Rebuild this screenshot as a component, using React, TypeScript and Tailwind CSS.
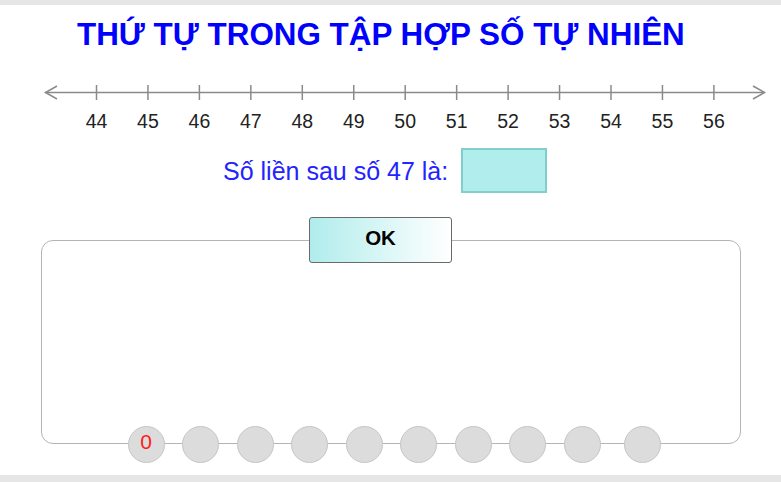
import React from "react";

const labels = [44, 45, 46, 47, 48, 49, 50, 51, 52, 53, 54, 55, 56];

function NumberLine() {
  const x0 = 96.5;
  const step = 51.45;
  return (
    <svg width="781" height="58" viewBox="0 80 781 58" className="block">
      <line x1="45" y1="92.5" x2="765" y2="92.5" stroke="#8a8a8a" strokeWidth="1.5" />
      <polyline points="57,86 45.5,92.5 57,99" fill="none" stroke="#8a8a8a" strokeWidth="1.5" />
      <polyline points="753,86 764.5,92.5 753,99" fill="none" stroke="#8a8a8a" strokeWidth="1.5" />
      {labels.map((n, i) => {
        const x = x0 + step * i;
        return (
          <g key={n}>
            <line x1={x} y1="85" x2={x} y2="100" stroke="#8a8a8a" strokeWidth="1.5" />
            <text
              x={x}
              y="128"
              textAnchor="middle"
              fontFamily="'Liberation Sans', Arial, sans-serif"
              fontSize="19.5"
              fill="#222"
            >
              {n}
            </text>
          </g>
        );
      })}
    </svg>
  );
}

export default function App() {
  const circles = [0, 1, 2, 3, 4, 5, 6, 7, 8, 9];
  return (
    <div
      className="w-[781px] h-[482px] bg-[#e6e6e6] flex flex-col overflow-hidden"
      style={{ fontFamily: "'Liberation Sans', Arial, sans-serif" }}
    >
      <div className="h-[5px] shrink-0" />
      <div className="h-[470px] bg-white flex flex-col shrink-0">
        <h1 className="mt-[14px] pl-[77px] text-[31.4px] leading-[32px] font-bold text-[#0000ff] whitespace-nowrap">
          THỨ TỰ TRONG TẬP HỢP SỐ TỰ NHIÊN
        </h1>
        <div className="mt-[29px]">
          <NumberLine />
        </div>
        <div className="mt-[10px] flex items-center pl-[223px]">
          <span className="text-[25px] leading-[28px] text-[#2323ff] whitespace-nowrap">
            Số liền sau số 47 là:
          </span>
          <div className="ml-[13px] w-[86px] h-[45px] bg-[#b2eded] border-2 border-[#80cfcb]" />
        </div>
        <div className="relative mt-[47px] ml-[41px] w-[700px] h-[204px] border border-[#b4b4b4] rounded-[12px]">
          <button className="absolute left-[267px] top-[-24px] w-[143px] h-[46px] rounded-[3px] border border-[#6a6a6a] bg-gradient-to-r from-[#b0ecec] to-white flex items-start justify-center pt-[9px]">
            <span className="text-[20.5px] leading-[22px] font-bold text-black">OK</span>
          </button>
          <div className="absolute left-[85.5px] bottom-[-20px] flex gap-[17.5px]">
            {circles.map((i) => (
              <div
                key={i}
                className={`w-[37px] h-[37px] rounded-full bg-[#dcdcdc] border-[1.5px] border-[#c6c6c6] flex items-start justify-center pt-[3px] ${i === 9 ? "ml-[5.5px]" : ""}`}
              >
                {i === 0 ? (
                  <span className="text-[21px] leading-[24px] text-[#ff1a1a]">0</span>
                ) : null}
              </div>
            ))}
          </div>
        </div>
      </div>
      <div className="flex-1" />
    </div>
  );
}
